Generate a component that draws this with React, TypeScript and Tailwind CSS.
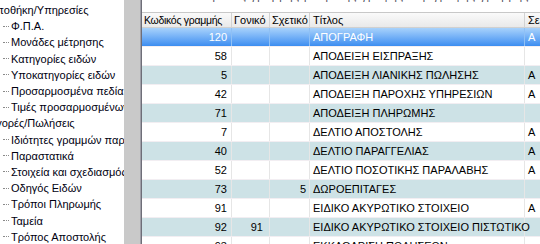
import React from "react";

type Row = { code: string; parent: string; rel: string; title: string; s: string };

const rows: Row[] = [
  { code: "120", parent: "", rel: "", title: "ΑΠΟΓΡΑΦΗ", s: "Α" },
  { code: "58", parent: "", rel: "", title: "ΑΠΟΔΕΙΞΗ ΕΙΣΠΡΑΞΗΣ", s: "" },
  { code: "5", parent: "", rel: "", title: "ΑΠΟΔΕΙΞΗ ΛΙΑΝΙΚΗΣ ΠΩΛΗΣΗΣ", s: "Α" },
  { code: "42", parent: "", rel: "", title: "ΑΠΟΔΕΙΞΗ ΠΑΡΟΧΗΣ ΥΠΗΡΕΣΙΩΝ", s: "Α" },
  { code: "71", parent: "", rel: "", title: "ΑΠΟΔΕΙΞΗ ΠΛΗΡΩΜΗΣ", s: "" },
  { code: "7", parent: "", rel: "", title: "ΔΕΛΤΙΟ ΑΠΟΣΤΟΛΗΣ", s: "Α" },
  { code: "40", parent: "", rel: "", title: "ΔΕΛΤΙΟ ΠΑΡΑΓΓΕΛΙΑΣ", s: "Α" },
  { code: "52", parent: "", rel: "", title: "ΔΕΛΤΙΟ ΠΟΣΟΤΙΚΗΣ ΠΑΡΑΛΑΒΗΣ", s: "Α" },
  { code: "73", parent: "", rel: "5", title: "ΔΩΡΟΕΠΙΤΑΓΕΣ", s: "" },
  { code: "91", parent: "", rel: "", title: "ΕΙΔΙΚΟ ΑΚΥΡΩΤΙΚΟ ΣΤΟΙΧΕΙΟ", s: "Α" },
  { code: "92", parent: "91", rel: "", title: "ΕΙΔΙΚΟ ΑΚΥΡΩΤΙΚΟ ΣΤΟΙΧΕΙΟ ΠΙΣΤΩΤΙΚΟ", s: "" },
  { code: "93", parent: "", rel: "", title: "ΕΚΚΑΘΑΡΙΣΗ ΠΩΛΗΣΕΩΝ", s: "" },
];

type TreeItem = { text: string; root?: boolean };
const tree: TreeItem[] = [
  { text: "Αποθήκη/Υπηρεσίες", root: true },
  { text: "Φ.Π.Α." },
  { text: "Μονάδες μέτρησης" },
  { text: "Κατηγορίες ειδών" },
  { text: "Υποκατηγορίες ειδών" },
  { text: "Προσαρμοσμένα πεδία" },
  { text: "Τιμές προσαρμοσμένων πεδίων" },
  { text: "Αγορές/Πωλήσεις", root: true },
  { text: "Ιδιότητες γραμμών παραστατικών" },
  { text: "Παραστατικά" },
  { text: "Στοιχεία και σχεδιασμός παραστατικών" },
  { text: "Οδηγός Ειδών" },
  { text: "Τρόποι Πληρωμής" },
  { text: "Ταμεία" },
  { text: "Τρόπος Αποστολής" },
];

const font = { fontFamily: '"Liberation Sans", Arial, sans-serif' };

export default function App() {
  return (
    <div className="w-[540px] h-[244px] overflow-hidden flex bg-white text-[11px] leading-[16px] text-black" style={font}>
      {/* Tree panel */}
      <div className="w-[124px] shrink-0 overflow-hidden bg-white pt-[2px]">
        {tree.map((t, i) =>
          t.root ? (
            <div key={i} className="h-[16.2px] flex items-center whitespace-nowrap text-[#000010]">
              <span className="shrink-0 ml-[-11px]">{t.text}</span>
            </div>
          ) : (
            <div key={i} className="h-[16.2px] flex items-center whitespace-nowrap text-[#000010]">
              <span className="shrink-0 ml-[3px] w-[6px] mr-[2px] border-t border-dotted border-[#8a8a8a]" />
              <span className="shrink-0">{t.text}</span>
            </div>
          )
        )}
      </div>
      {/* Splitter */}
      <div className="w-[16px] shrink-0 bg-[#c9c9c9]" />
      <div className="w-[1px] shrink-0 bg-[#a0a0a8]" />
      <div className="w-[1px] shrink-0 bg-[#6e6e78]" />
      {/* Grid panel */}
      <div className="flex-1 overflow-hidden flex flex-col">
        <div className="h-[12px] shrink-0 overflow-hidden pl-[48px]">
          <div className="mt-[-12px] whitespace-nowrap text-[#505060] tracking-[1px]">
            Ρυθμίσεις γραμμής ρύθμισης γραφής περιγραφής γραμμής
          </div>
        </div>
        <div className="flex h-[16px] shrink-0 border-t border-[#c8c8c8] border-b border-b-[#d0d0d0] bg-gradient-to-b from-[#fafafa] to-[#e9e9e9] whitespace-nowrap overflow-hidden">
          <div className="w-[90px] shrink-0 pl-[2px] border-r border-[#d2d2d2] flex items-center text-[10.5px] tracking-[-0.3px] overflow-hidden">Κωδικός γραμμής</div>
          <div className="w-[38px] shrink-0 pl-[2px] border-r border-[#d2d2d2] flex items-center overflow-hidden">Γονικό</div>
          <div className="w-[40px] shrink-0 pl-[2px] border-r border-[#d2d2d2] flex items-center overflow-hidden">Σχετικό</div>
          <div className="w-[215px] shrink-0 pl-[3px] border-r border-[#d2d2d2] flex items-center">Τίτλος</div>
          <div className="w-[40px] shrink-0 pl-[3px] flex items-center">Σειρά</div>
        </div>
        {rows.map((r, i) => {
          const sel = i === 0;
          const alt = i % 2 === 0;
          const bg = sel
            ? "bg-gradient-to-b from-[#a8d2fb] to-[#3b8df0] text-white"
            : alt
            ? "bg-[#cde2e6]"
            : "bg-white";
          const sep = sel ? "border-[#8fc0f5]" : "border-[#e6e6e6]";
          return (
            <div key={i} className={`flex h-[19px] shrink-0 border-b border-b-[#f2eef2] whitespace-nowrap overflow-hidden ${bg}`}>
              <div className={`w-[90px] shrink-0 pr-[4px] border-r ${sep} flex items-center justify-end`}>{r.code}</div>
              <div className={`w-[38px] shrink-0 pr-[6px] border-r ${sep} flex items-center justify-end`}>{r.parent}</div>
              <div className={`w-[40px] shrink-0 pr-[3px] border-r ${sep} flex items-center justify-end`}>{r.rel}</div>
              <div className={`w-[215px] shrink-0 pl-[3px] border-r ${sep} flex items-center`}>{r.title}</div>
              <div className="w-[40px] shrink-0 pl-[3px] flex items-center">{r.s}</div>
            </div>
          );
        })}
      </div>
    </div>
  );
}
